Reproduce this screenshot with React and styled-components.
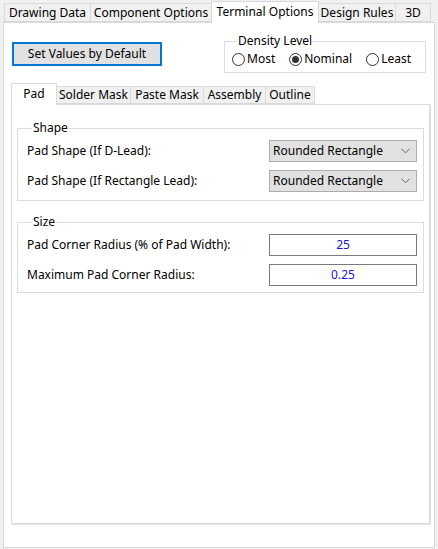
import styled, { createGlobalStyle } from "styled-components";

const GlobalStyle = createGlobalStyle`
  html, body { margin: 0; padding: 0; background: #f0f0f0; }
  body {
    font-family: "Noto Sans", "Liberation Sans", sans-serif;
    font-size: 12px;
    color: #000;
  }
`;

const Window = styled.div`
  width: 438px;
  height: 549px;
  box-sizing: border-box;
  padding: 0 3px 1px 3px;
  display: flex;
  flex-direction: column;
`;

const TabStrip = styled.div`
  display: flex;
  align-items: flex-end;
  height: ${(p) => p.$h}px;
  padding-left: ${(p) => p.$pad || 0}px;
  flex-shrink: 0;
`;

const Tab = styled.div`
  box-sizing: border-box;
  width: ${(p) => p.$w}px;
  height: ${(p) => (p.$active ? p.$activeH : p.$h)}px;
  margin-left: ${(p) => (p.$first ? 0 : -1)}px;
  margin-bottom: ${(p) => (p.$active ? -1 : 0)}px;
  border: 1px solid #d9d9d9;
  border-bottom: ${(p) => (p.$active ? "none" : "1px solid #d9d9d9")};
  background: ${(p) => (p.$active ? "#fff" : "#f0f0f0")};
  position: relative;
  z-index: ${(p) => (p.$active ? 2 : 1)};
  display: flex;
  align-items: ${(p) => (p.$active ? "flex-start" : "center")};
  padding-top: ${(p) => (p.$active ? 2 : 0)}px;
  justify-content: center;
  white-space: nowrap;
  line-height: 16px;
`;

const Page = styled.div`
  flex: 1;
  display: flex;
  flex-direction: column;
  background: #fff;
  border: 1px solid #d9d9d9;
  min-height: 0;
`;

const TopRow = styled.div`
  display: flex;
  justify-content: space-between;
  align-items: flex-start;
  padding: 10px 8px 0 8px;
`;

const DefaultButton = styled.button`
  box-sizing: border-box;
  margin-top: 9px;
  width: 150px;
  height: 24px;
  border: 2px solid #0078d7;
  background: #e1e1e1;
  font: inherit;
  color: #000;
  padding: 0 0 1px;
  line-height: 16px;
`;

const Group = styled.fieldset`
  box-sizing: border-box;
  margin: ${(p) => p.$margin || 0};
  width: ${(p) => (p.$w ? `${p.$w}px` : "auto")};
  border: 1px solid #dcdcdc;
  padding: ${(p) => p.$pad};
  min-width: 0;
`;

const Legend = styled.legend`
  padding: 0 1px;
  margin-left: 5px;
  line-height: 16px;
`;

const RadioRow = styled.div`
  display: flex;
  gap: 14px;
  height: 16px;
  align-items: center;
`;

const RadioItem = styled.label`
  display: flex;
  align-items: center;
  gap: 2px;
  line-height: 16px;
`;

const RadioCircle = styled.span`
  box-sizing: border-box;
  width: 13px;
  height: 13px;
  border-radius: 50%;
  border: 1px solid #333;
  background: #fff;
  display: flex;
  align-items: center;
  justify-content: center;
  &::after {
    content: "";
    width: 7px;
    height: 7px;
    border-radius: 50%;
    background: #333;
    display: ${(p) => (p.$checked ? "block" : "none")};
  }
`;

const InnerTabs = styled.div`
  flex: 1;
  display: flex;
  flex-direction: column;
  margin: 10px 4px 23px 7px;
`;

const InnerPage = styled.div`
  flex: 1;
  background: #fff;
  border: 1px solid #d9d9d9;
  box-shadow: 1px 1px 0 #e6e6e6;
  padding: 15px 5px 0 5px;
  display: flex;
  flex-direction: column;
`;

const FieldRow = styled.div`
  display: flex;
  justify-content: space-between;
  align-items: center;
  & + & {
    margin-top: ${(p) => p.$gap}px;
  }
`;

const Label = styled.span`
  line-height: 16px;
`;

const Combo = styled.div`
  box-sizing: border-box;
  width: 148px;
  height: 22px;
  background: #e1e1e1;
  border: 1px solid #adadad;
  display: flex;
  align-items: center;
  justify-content: space-between;
  padding: 0 6px 0 3px;
  line-height: 16px;
`;

const ValueBox = styled.div`
  box-sizing: border-box;
  width: 148px;
  height: 22px;
  background: #fff;
  border: 1px solid #7a7a7a;
  color: #1515d6;
  display: flex;
  align-items: center;
  justify-content: center;
  line-height: 16px;
`;

const Chevron = () => (
  <svg width="9" height="6" viewBox="0 0 9 6">
    <path d="M0.5 0.8 L4.5 4.8 L8.5 0.8" fill="none" stroke="#606060" strokeWidth="1" />
  </svg>
);

const outerTabs = [
  { label: "Drawing Data", w: 87 },
  { label: "Component Options", w: 122 },
  { label: "Terminal Options", w: 108, active: true },
  { label: "Design Rules", w: 78 },
  { label: "3D", w: 36 },
];

const innerTabs = [
  { label: "Pad", w: 46, active: true },
  { label: "Solder Mask", w: 75 },
  { label: "Paste Mask", w: 74 },
  { label: "Assembly", w: 63 },
  { label: "Outline", w: 50 },
];

const densities = [
  { label: "Most" },
  { label: "Nominal", checked: true },
  { label: "Least" },
];

const App = () => {
  return (
    <Window>
      <GlobalStyle />
      <TabStrip $h={22} $pad={1}>
        {outerTabs.map((t, i) => (
          <Tab key={t.label} $w={t.w} $h={19} $activeH={22} $active={t.active} $first={i === 0}>
            {t.label}
          </Tab>
        ))}
      </TabStrip>
      <Page>
        <TopRow>
          <DefaultButton>Set Values by Default</DefaultButton>
          <Group $w={202} $pad="2px 6px 5px 7px">
            <Legend>Density Level</Legend>
            <RadioRow>
              {densities.map((d) => (
                <RadioItem key={d.label}>
                  <RadioCircle $checked={d.checked} />
                  {d.label}
                </RadioItem>
              ))}
            </RadioRow>
          </Group>
        </TopRow>

        <InnerTabs>
          <TabStrip $h={21}>
            {innerTabs.map((t, i) => (
              <Tab key={t.label} $w={t.w} $h={18} $activeH={22} $active={t.active} $first={i === 0}>
                {t.label}
              </Tab>
            ))}
          </TabStrip>
          <InnerPage>
            <Group $pad="4px 6px 8px 9px">
              <Legend>Shape</Legend>
              <FieldRow $gap={7}>
                <Label>Pad Shape (If D-Lead):</Label>
                <Combo>
                  Rounded Rectangle
                  <Chevron />
                </Combo>
              </FieldRow>
              <FieldRow $gap={7}>
                <Label>Pad Shape (If Rectangle Lead):</Label>
                <Combo>
                  Rounded Rectangle
                  <Chevron />
                </Combo>
              </FieldRow>
            </Group>

            <Group $margin="13px 0 0 0" $pad="4px 6px 6px 9px">
              <Legend>Size</Legend>
              <FieldRow $gap={8}>
                <Label>Pad Corner Radius (% of Pad Width):</Label>
                <ValueBox>25</ValueBox>
              </FieldRow>
              <FieldRow $gap={8}>
                <Label>Maximum Pad Corner Radius:</Label>
                <ValueBox>0.25</ValueBox>
              </FieldRow>
            </Group>
          </InnerPage>
        </InnerTabs>
      </Page>
    </Window>
  );
};

export default App;
